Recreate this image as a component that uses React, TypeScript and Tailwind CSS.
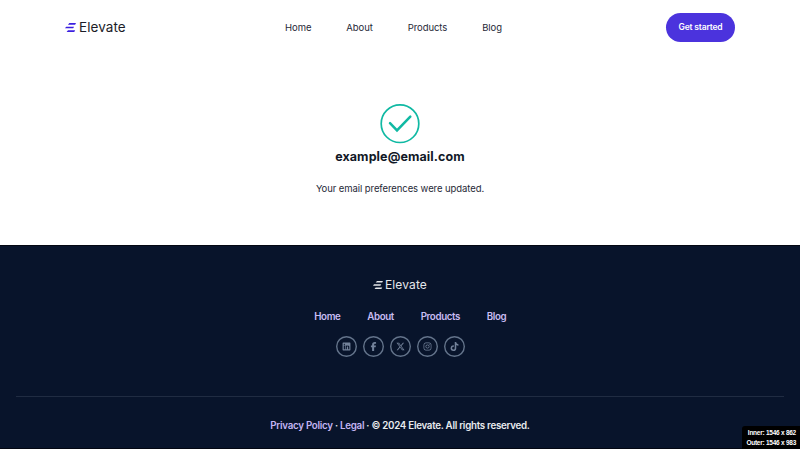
import React from "react";
import { FaLinkedin, FaFacebookF, FaXTwitter, FaInstagram, FaTiktok } from "react-icons/fa6";

function Mark({ className }: { className: string }) {
  return (
    <svg viewBox="0 0 20 16" className={className} fill="currentColor">
      <path d="M8 0h12l-1.6 3H5.4z" />
      <path d="M2 6.5h14.5l-1.6 3H0z" />
      <path d="M5.4 13h13l-1.6 3H3z" />
    </svg>
  );
}

const links = ["Home", "About", "Products", "Blog"];
const socials = [FaLinkedin, FaFacebookF, FaXTwitter, FaInstagram, FaTiktok];

export default function App() {
  return (
    <div className="flex h-[449px] w-[800px] flex-col overflow-hidden bg-white font-['Inter',sans-serif] text-[#111827]">
      <header className="grid h-[54px] shrink-0 grid-cols-[220px_1fr_69px] items-center pr-[65px] pl-[65px]">
        <div className="flex items-center gap-[3px]">
          <Mark className="h-[9px] w-[11px] text-[#3b1fe0]" />
          <span className="pt-px text-[13.5px] leading-none tracking-[0.06px] text-[#1c1c28]">Elevate</span>
        </div>
        <nav className="flex gap-[34.9px] pt-[1.5px] text-[9.5px] tracking-[-0.06px] text-[#1f2937]">
          {links.map((l) => (
            <a key={l}>{l}</a>
          ))}
        </nav>
        <button className="h-[29px] rounded-full bg-[#4b33dd] text-[8.5px] font-semibold tracking-[-0.18px] text-white">Get started</button>
      </header>

      <main className="flex h-[191px] shrink-0 flex-col items-center pt-[50px]">
        <svg viewBox="0 0 40 40" className="size-10 text-[#10b9a3]" fill="none" stroke="currentColor">
          <circle cx="20" cy="19.7" r="18.8" strokeWidth="1.7" />
          <path d="M10 19.2l7 7.2L30.3 12.7" strokeWidth="2.5" strokeLinecap="round" />
        </svg>
        <h1 className="mt-[4px] text-[12.5px] leading-[18px] font-bold tracking-[0.1px]">example@email.com</h1>
        <p className="mt-[16px] text-[9.5px] leading-[14px] tracking-[-0.08px] text-[#1f2937]">Your email preferences were updated.</p>
      </main>

      <footer className="flex flex-1 flex-col items-center border-y border-[#030712] bg-[#08142b]">
        <div className="mt-[34px] flex h-[10px] items-center gap-[2px] text-[#e5e7eb]">
          <Mark className="h-[8px] w-[10px]" />
          <span className="text-[12px] leading-none tracking-[0.12px]">Elevate</span>
        </div>
        <nav className="mt-[20px] ml-[20.5px] flex h-[14px] items-center gap-[26.8px] text-[9.75px] font-semibold tracking-[-0.38px] text-[#c9bdf3]">
          {links.map((l) => (
            <a key={l}>{l}</a>
          ))}
        </nav>
        <div className="mt-[12px] flex gap-[6px]">
          {socials.map((Icon, i) => (
            <span key={i} className="flex size-[21px] items-center justify-center rounded-full text-[#73829a] ring-[1.4px] ring-[#64748b] ring-inset">
              <Icon className="size-[9px]" />
            </span>
          ))}
        </div>
        <div className="mt-[39px] h-px w-[768px] bg-[#202c42]" />
        <p className="mt-[22px] text-[9.75px] leading-[14px] font-semibold tracking-[-0.27px] text-[#e9ebee]">
          <a className="text-[#c4b5f4]">Privacy Policy</a> · <a className="text-[#c4b5f4]">Legal</a> · © 2024 Elevate. All rights reserved.
        </p>
      </footer>

      <div className="absolute top-[426px] left-[742px] flex h-[23px] w-[58px] flex-col items-end justify-center rounded-tl-[3px] bg-black pr-[4px] font-['Liberation_Sans',sans-serif] text-[6.5px] leading-[10px] font-bold tracking-[-0.25px] text-white">
        <span>Inner: 1546 x 862</span>
        <span>Outer: 1546 x 983</span>
      </div>
    </div>
  );
}
